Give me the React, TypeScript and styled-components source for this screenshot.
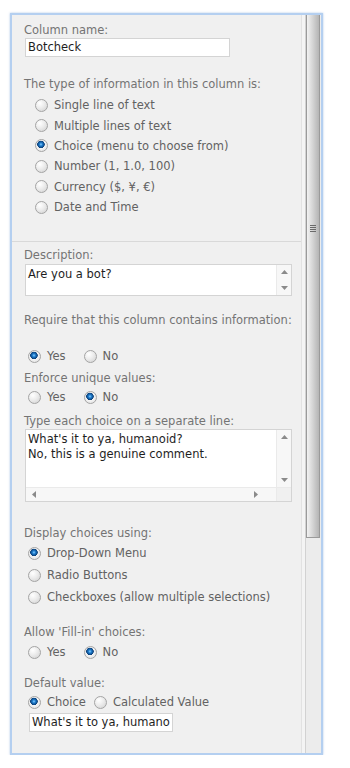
import React from "react";
import styled, { createGlobalStyle } from "styled-components";

const GlobalStyle = createGlobalStyle`
  html, body {
    margin: 0;
    padding: 0;
    background: #ffffff;
  }
  body {
    font-family: "DejaVu Sans", Verdana, sans-serif;
    font-size: 11.5px;
  }
`;

const Frame = styled.div`
  margin: 13px 0 0 10px;
  width: 309px;
  height: 738px;
  border: 2px solid #b4cff0;
  box-shadow: 0 0 2px rgba(120, 160, 215, 0.6);
  display: flex;
  background: #f0f0f0;
  overflow: hidden;
`;

const Content = styled.div`
  width: 289px;
  flex: none;
  background: #f0f0f0;
  border-right: 1px solid #e2e2e2;
`;

const Gutter = styled.div`
  width: 3px;
  flex: none;
  background: #f4f4f4;
  border-right: 1px solid #d2d2d2;
`;

const Scrollbar = styled.div`
  flex: 1;
  display: flex;
  flex-direction: column;
  background: #ececec;
`;

const Thumb = styled.div`
  height: 523px;
  margin: 0 1px 0 0;
  border: 1px solid #9a9a9a;
  border-top: none;
  background: linear-gradient(to right, #f2f2f2, #d6d6d6 45%, #b4b4b4);
  display: flex;
  align-items: center;
  justify-content: center;
  padding-bottom: 96px;
  box-sizing: border-box;
`;

const Grip = styled.div`
  width: 6px;
  height: 7px;
  background: repeating-linear-gradient(
    to bottom,
    #6a6a6a 0,
    #6a6a6a 1px,
    transparent 1px,
    transparent 2px
  );
`;

const Section = styled.div<{ $pt?: number; $pb?: number; $line?: boolean }>`
  padding: ${(p) => p.$pt ?? 0}px 0 ${(p) => p.$pb ?? 0}px 12px;
  border-bottom: ${(p) => (p.$line ? "1px solid #d9d9d9" : "none")};
`;

const Label = styled.div<{ $mt?: number }>`
  color: #747474;
  line-height: 16px;
  height: 16px;
  margin-top: ${(p) => p.$mt ?? 0}px;
  white-space: nowrap;
`;

const TextBox = styled.div<{ $w: number; $ml?: number; $mt?: number }>`
  width: ${(p) => p.$w}px;
  height: 19px;
  box-sizing: border-box;
  margin-left: ${(p) => p.$ml ?? 1}px;
  margin-top: ${(p) => p.$mt ?? 0}px;
  background: #fff;
  border: 1px solid #d4d4d4;
  color: #1e1e1e;
  padding: 0 2px;
  line-height: 17px;
  white-space: nowrap;
  overflow: hidden;
`;

const Area = styled.div<{ $h: number; $mt?: number }>`
  width: 267px;
  height: ${(p) => p.$h}px;
  margin-left: 1px;
  margin-top: ${(p) => p.$mt ?? 0}px;
  box-sizing: border-box;
  background: #fff;
  border: 1px solid #d4d4d4;
  display: grid;
  grid-template-columns: 1fr 15px;
  grid-template-rows: 1fr auto;
`;

const AreaText = styled.div`
  color: #1e1e1e;
  padding: 2px 2px;
  line-height: 15px;
  white-space: nowrap;
  overflow: hidden;
`;

const VBar = styled.div`
  background: #f7f7f7;
  border-left: 1px solid #eaeaea;
  display: flex;
  flex-direction: column;
  justify-content: space-between;
  align-items: center;
  padding: 5px 0;
`;

const HBar = styled.div`
  height: 13px;
  background: #f7f7f7;
  border-top: 1px solid #eaeaea;
  display: flex;
  justify-content: space-between;
  align-items: center;
  padding: 0 18px 0 6px;
`;

const Corner = styled.div`
  background: #f0f0f0;
  border-top: 1px solid #eaeaea;
  border-left: 1px solid #eaeaea;
`;

const Options = styled.div<{ $mt?: number; $ml?: number; $row: number }>`
  margin-top: ${(p) => p.$mt ?? 0}px;
  margin-left: ${(p) => p.$ml ?? 0}px;
  display: flex;
  flex-direction: column;
  & > * {
    height: ${(p) => p.$row}px;
  }
`;

const Inline = styled.div<{ $mt?: number; $gap: number }>`
  margin-top: ${(p) => p.$mt ?? 0}px;
  margin-left: 4px;
  height: 20px;
  display: flex;
  align-items: center;
  gap: ${(p) => p.$gap}px;
`;

const Choice = styled.div`
  display: flex;
  align-items: center;
  gap: 6px;
  color: #626262;
  white-space: nowrap;
`;

const Dot = styled.span<{ $on?: boolean }>`
  width: 11px;
  height: 11px;
  flex: none;
  border-radius: 50%;
  border: 1px solid #a4a4a4;
  background: ${(p) =>
    p.$on
      ? "radial-gradient(circle at 45% 40%, #8fd0ff 0, #1f7fd0 1.5px, #0b3f78 3.5px, #f4f4f4 4px, #dcdcdc 100%)"
      : "radial-gradient(circle at 35% 30%, #ffffff 0, #ececec 45%, #cfcfcf 100%)"};
`;

const Arrow = ({ dir }: { dir: "up" | "down" | "left" | "right" }) => {
  const pts = {
    up: "0,4 3.5,0 7,4",
    down: "0,0 3.5,4 7,0",
    left: "4,0 0,3.5 4,7",
    right: "0,0 4,3.5 0,7",
  }[dir];
  const horiz = dir === "left" || dir === "right";
  return (
    <svg width={horiz ? 4 : 7} height={horiz ? 7 : 4} viewBox={horiz ? "0 0 4 7" : "0 0 7 4"}>
      <polygon points={pts} fill="#8a8a8a" />
    </svg>
  );
};

const Radio = ({ on, children }: { on?: boolean; children: React.ReactNode }) => (
  <Choice>
    <Dot $on={on} />
    <span>{children}</span>
  </Choice>
);

export default function App() {
  return (
    <>
      <GlobalStyle />
      <Frame>
        <Content>
          <Section $pt={7} $pb={24} $line>
            <Label>Column name:</Label>
            <TextBox $w={205}>Botcheck</TextBox>
            <Label $mt={19}>The type of information in this column is:</Label>
            <Options $mt={3} $ml={11} $row={20.4}>
              <Radio>Single line of text</Radio>
              <Radio>Multiple lines of text</Radio>
              <Radio on>Choice (menu to choose from)</Radio>
              <Radio>Number (1, 1.0, 100)</Radio>
              <Radio>Currency ($, ¥, €)</Radio>
              <Radio>Date and Time</Radio>
            </Options>
          </Section>
          <Section $pt={5}>
            <Label>Description:</Label>
            <Area $h={32} $mt={1}>
              <AreaText>Are you a bot?</AreaText>
              <VBar>
                <Arrow dir="up" />
                <Arrow dir="down" />
              </VBar>
            </Area>
            <Label $mt={16}>Require that this column contains information:</Label>
            <Inline $mt={18} $gap={18}>
              <Radio on>Yes</Radio>
              <Radio>No</Radio>
            </Inline>
            <Label $mt={4}>Enforce unique values:</Label>
            <Inline $mt={1} $gap={18}>
              <Radio>Yes</Radio>
              <Radio on>No</Radio>
            </Inline>
            <Label $mt={6}>Type each choice on a separate line:</Label>
            <Area $h={73}>
              <AreaText>
                What's it to ya, humanoid?
                <br />
                No, this is a genuine comment.
              </AreaText>
              <VBar>
                <Arrow dir="up" />
                <Arrow dir="down" />
              </VBar>
              <HBar>
                <Arrow dir="left" />
                <Arrow dir="right" />
              </HBar>
              <Corner />
            </Area>
            <Label $mt={23}>Display choices using:</Label>
            <Options $mt={1} $ml={4} $row={22}>
              <Radio on>Drop-Down Menu</Radio>
              <Radio>Radio Buttons</Radio>
              <Radio>Checkboxes (allow multiple selections)</Radio>
            </Options>
            <Label $mt={16}>Allow 'Fill-in' choices:</Label>
            <Inline $mt={2} $gap={18}>
              <Radio>Yes</Radio>
              <Radio on>No</Radio>
            </Inline>
            <Label $mt={13}>Default value:</Label>
            <Inline $mt={1} $gap={8}>
              <Radio on>Choice</Radio>
              <Radio>Calculated Value</Radio>
            </Inline>
            <TextBox $w={144} $ml={5} $mt={1}>
              What's it to ya, humano
            </TextBox>
          </Section>
        </Content>
        <Gutter />
        <Scrollbar>
          <Thumb>
            <Grip />
          </Thumb>
        </Scrollbar>
      </Frame>
    </>
  );
}
